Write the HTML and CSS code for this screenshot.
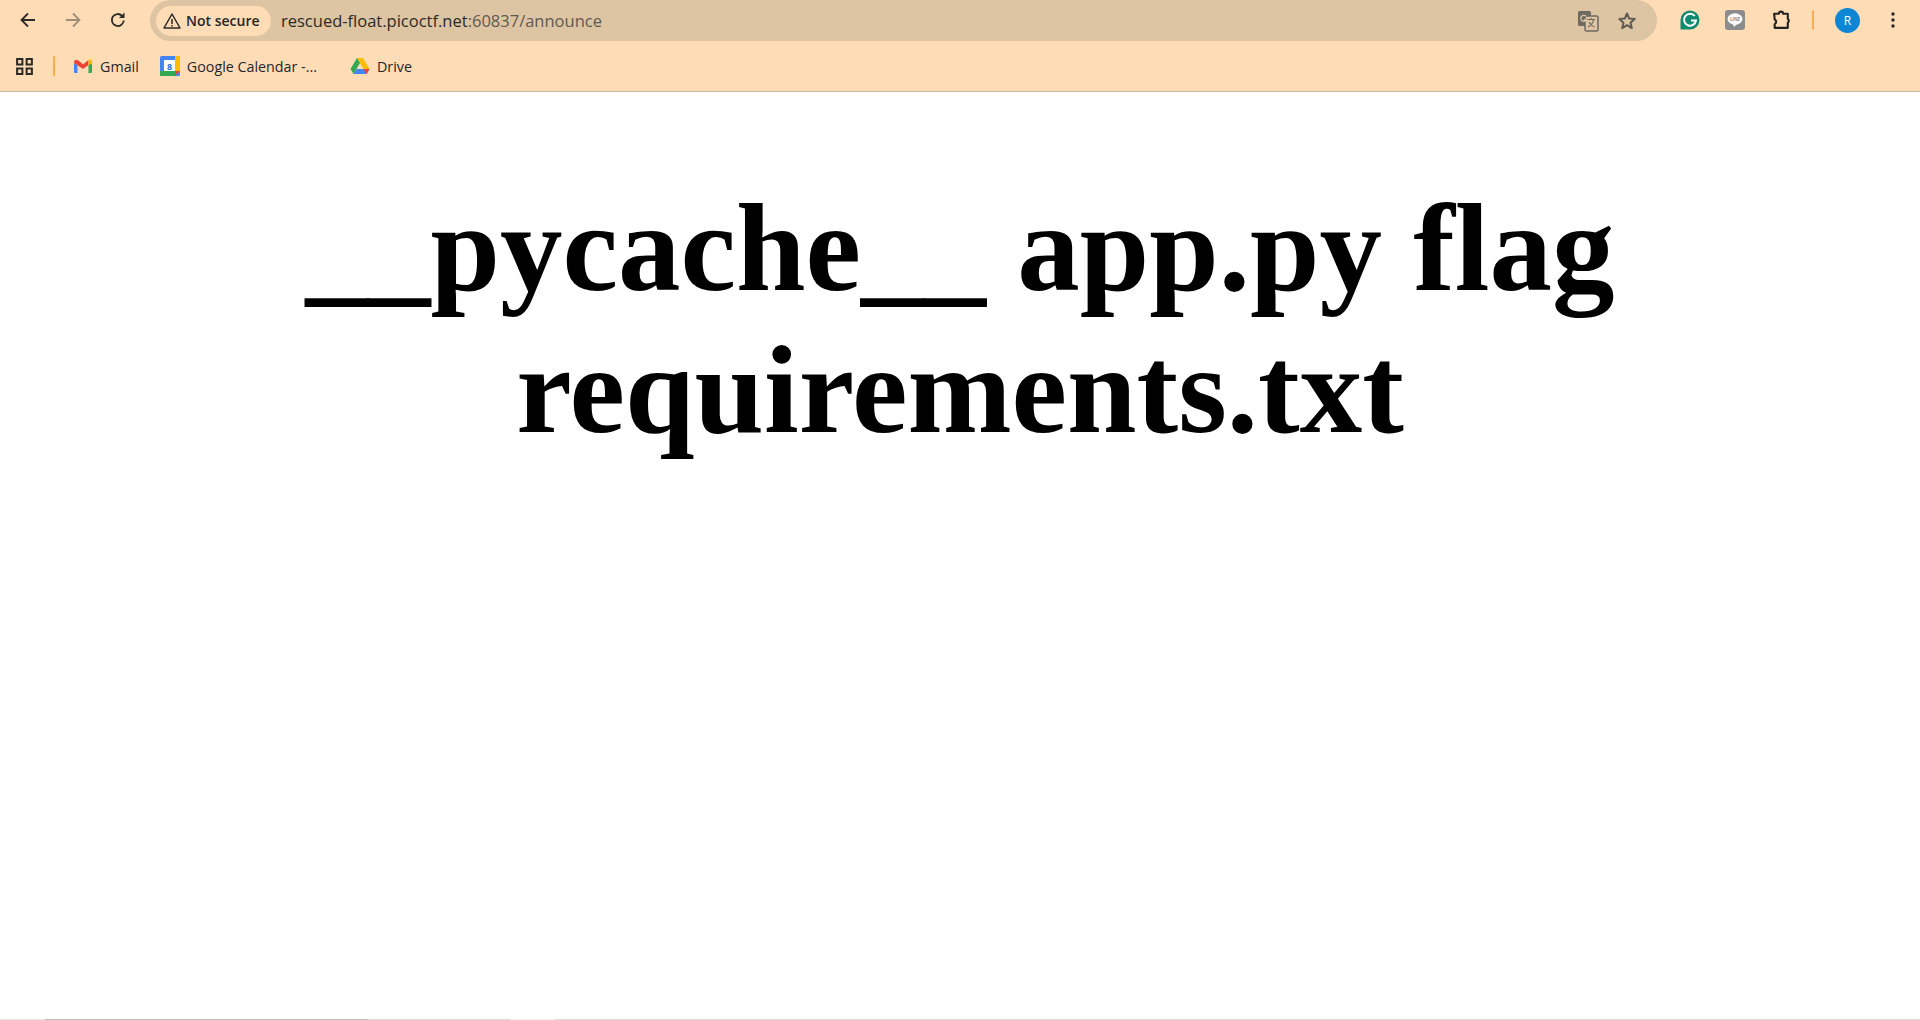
FILE: index.html
```html
<!DOCTYPE html>
<html>
<head>
    <title>Announce</title>
    <link rel="stylesheet" href="styles.css">
</head>
<body>
    <header class="chrome">
        <div class="toolbar">
            <div class="nav-buttons">
                <svg class="nav-icon" viewBox="0 0 20 20"><path d="M17 10H4M10 3.5 3.5 10l6.500 6.500" fill="none" stroke="#2b2a26" stroke-width="1.800"/></svg>
                <svg class="nav-icon" viewBox="0 0 20 20"><path d="M3 10h13M10 3.500l6.500 6.500-6.500 6.500" fill="none" stroke="#a08f78" stroke-width="1.800"/></svg>
                <svg class="nav-icon" viewBox="0 0 20 20"><path d="M15.800 10.500a6 6 0 1 1-1.700-4.700" fill="none" stroke="#2b2a26" stroke-width="1.800"/><path d="M16.500 2.500v5.500H11z" fill="#2b2a26"/></svg>
            </div>
            <div class="omnibox">
                <div class="security-chip">
                    <svg class="warn-icon" viewBox="0 0 20 20"><path d="M10 3 2 17h16z" fill="none" stroke="#2b2a26" stroke-width="1.500" stroke-linejoin="round"/><path d="M10 8v5M10 14v1.500" stroke="#2b2a26" stroke-width="1.500"/></svg>
                    <span>Not secure</span>
                </div>
                <div class="url">rescued-float.picoctf.net<span class="url-dim">:60837/announce</span></div>
                <svg class="translate-icon" viewBox="0 0 22 22">
                    <rect x="1" y="1" width="13" height="15" rx="1.500" fill="#6f6a62"/>
                    <rect x="8" y="6" width="13" height="15" rx="1.500" fill="#ddc4a2" stroke="#6f6a62" stroke-width="1.500"/>
                    <path d="M10 9.500h8M14 8v1.500M11 17c3-1.500 5-4 5.500-7.500M12 12c1 2 3 4 5.500 5" fill="none" stroke="#6f6a62" stroke-width="1.200"/>
                    <path d="M9 6.200A3 3 0 1 0 9.300 10H6.800" fill="none" stroke="#ddc4a2" stroke-width="1.300"/>
                </svg>
                <svg class="star-icon" viewBox="0 0 20 20"><path d="m10 2.500 2.200 5.100 5.500.5-4.200 3.600 1.300 5.400L10 14.200l-4.800 2.900 1.300-5.400L2.300 8.100l5.500-.5z" fill="none" stroke="#5f5b54" stroke-width="2" stroke-linejoin="round"/></svg>
            </div>
            <div class="extensions">
                <svg class="ext-grammarly" viewBox="0 0 20 20">
                    <path d="M10 .5a9.500 9.500 0 0 1 0 19H.5V10A9.500 9.500 0 0 1 10 .5z" fill="#0e8a6e"/>
                    <path d="M14.800 6a6 6 0 1 0 1.200 4.500h-5" fill="none" stroke="#ffffff" stroke-width="2"/>
                </svg>
                <svg class="ext-line" viewBox="0 0 20 20">
                    <rect width="20" height="20" rx="3" fill="#8c8c8c"/>
                    <ellipse cx="10" cy="9" rx="7.500" ry="5.800" fill="#ffffff"/>
                    <path d="M8 14h4l-3 3z" fill="#ffffff"/>
                    <text x="10" y="10.500" class="line-label">LINE</text>
                </svg>
                <svg class="ext-puzzle" viewBox="0 0 20 20"><path d="M3 3.500h4.500a2 2 0 0 1 4 0H16v5a2 2 0 0 1 0 3.500v5H3.500v-3.500a2.500 2.500 0 0 0 0-4.500z" fill="none" stroke="#22221f" stroke-width="2" stroke-linejoin="round"/></svg>
                <div class="orange-sep"></div>
                <div class="avatar">R</div>
                <svg class="menu-icon" viewBox="0 0 4 18"><circle cx="2" cy="3" r="1.700"/><circle cx="2" cy="9" r="1.700"/><circle cx="2" cy="15" r="1.700"/></svg>
            </div>
        </div>
        <div class="bookmarks">
            <svg class="apps-icon" viewBox="0 0 18 18"><path d="M2 2h5v5H2zM11 2h5v5h-5zM2 11h5v5H2zM11 11h5v5h-5z" fill="none" stroke="#2b2a26" stroke-width="1.900"/></svg>
            <div class="orange-sep bookmark-sep"></div>
            <a class="bookmark bookmark-gmail">
                <svg class="bookmark-icon" viewBox="0 0 20 16">
                    <path d="M1 5v9a1 1 0 0 0 1 1h2.500V7z" fill="#4285f4"/>
                    <path d="M19 5v9a1 1 0 0 1-1 1h-2.500V7z" fill="#34a853"/>
                    <path d="M1 5c0-3 2-4 4-2.500L10 6.500l-2 3-3.500-2.500L1 5z" fill="#ea4335"/>
                    <path d="M4.500 7V2L10 6.500 15.500 2v5L10 11z" fill="#ea4335"/>
                    <path d="M15.500 2c2-1.500 3.500-.5 3.500 3l-3.500 2.500z" fill="#fbbc04"/>
                </svg>
                <span>Gmail</span>
            </a>
            <a class="bookmark bookmark-calendar">
                <svg class="bookmark-icon" viewBox="0 0 20 20">
                    <rect width="20" height="20" rx="1.500" fill="#4285f4"/>
                    <rect x="15" width="5" height="15" fill="#fbbc04"/>
                    <rect y="15" width="15" height="5" fill="#34a853"/>
                    <path d="M15 15h5l-5 5z" fill="#ea4335"/>
                    <rect x="4" y="4" width="11" height="11" fill="#fff"/>
                    <text x="9.500" y="13.500" class="calendar-day">8</text>
                </svg>
                <span>Google Calendar -...</span>
            </a>
            <a class="bookmark">
                <svg class="bookmark-icon" viewBox="0 0 20 18">
                    <path d="M7 1h6l6.500 11h-6z" fill="#fbbc04"/>
                    <path d="M7 1 .5 12l3 5 6.500-11z" fill="#34a853"/>
                    <path d="M3.500 17h13l3-5H6.500z" fill="#4285f4"/>
                    <path d="M13.500 12h6l-3 5z" fill="#ea4335"/>
                </svg>
                <span>Drive</span>
            </a>
        </div>
    </header>

    <main class="content">
        <h1 class="listing">__pycache__ app.py flag requirements.txt</h1>
    </main>

    <div class="taskbar-edge">
        <span class="edge-a"></span>
        <span class="edge-b"></span>
        <span class="edge-c"></span>
        <span class="edge-d"></span>
        <span class="edge-e"></span>
    </div>
</body>
</html>
```

FILE: styles.css
```css
html, body {
    height: 100%;
}

body {
    margin: 0;
    padding: 0;
    display: flex;
    flex-direction: column;
    background-color: #ffffff;
    overflow: hidden;
}

.chrome {
    height: 91px;
    flex-shrink: 0;
    display: flex;
    flex-direction: column;
    background-color: #fedcb6;
    border-bottom: 1px solid #cdb9a0;
    font-family: "Open Sans", "Noto Sans", Arial, sans-serif;
    color: #26262a;
}

.toolbar {
    height: 41px;
    display: flex;
    align-items: flex-start;
}

.nav-buttons {
    width: 150px;
    height: 40px;
    flex-shrink: 0;
    display: flex;
    align-items: center;
    padding-left: 18px;
    gap: 25px;
    box-sizing: border-box;
}

.nav-icon {
    width: 20px;
    height: 20px;
}

.omnibox {
    width: 1507px;
    height: 41px;
    flex-shrink: 0;
    display: flex;
    align-items: center;
    box-sizing: border-box;
    padding-left: 6px;
    background-color: #ddc4a2;
    border-radius: 21px;
}

.security-chip {
    width: 115px;
    height: 30px;
    flex-shrink: 0;
    display: flex;
    align-items: center;
    box-sizing: border-box;
    padding-left: 6px;
    gap: 4px;
    background-color: #fedcb6;
    border-radius: 15px;
    font-size: 14px;
    font-weight: 600;
    white-space: nowrap;
}

.warn-icon {
    width: 20px;
    height: 20px;
}

.url {
    margin-left: 10px;
    font-size: 16.500px;
    color: #2c2a26;
    white-space: nowrap;
    flex: 1;
}

.url-dim {
    color: #5f5a52;
}

.translate-icon {
    width: 22px;
    height: 22px;
    margin-right: 18px;
}

.star-icon {
    width: 20px;
    height: 20px;
    margin-right: 20px;
}

.extensions {
    flex: 1;
    height: 40px;
    display: flex;
    align-items: center;
    padding-left: 23px;
}

.ext-grammarly {
    width: 20px;
    height: 20px;
    margin-right: 25px;
}

.ext-line {
    width: 20px;
    height: 20px;
    margin-right: 26px;
}

.line-label {
    font-family: "Open Sans", Arial, sans-serif;
    font-size: 4.500px;
    font-weight: 700;
    fill: #8c8c8c;
    text-anchor: middle;
}

.ext-puzzle {
    width: 21px;
    height: 21px;
}

.orange-sep {
    width: 2px;
    height: 20px;
    margin: 0 21px 0 20px;
    background-color: #f9ae4d;
    border-radius: 1px;
}

.avatar {
    width: 25px;
    height: 25px;
    flex-shrink: 0;
    background-color: #0d86d6;
    border-radius: 50%;
    color: #ffffff;
    font-size: 12px;
    line-height: 25px;
    text-align: center;
}

.menu-icon {
    width: 4px;
    height: 18px;
    margin-left: 31px;
    fill: #26262a;
}

.bookmarks {
    flex: 1;
    display: flex;
    align-items: center;
    padding-left: 15px;
    font-size: 14.300px;
}

.apps-icon {
    width: 19px;
    height: 19px;
}

.bookmark-sep {
    margin: 0 18px 0 19px;
}

.bookmark {
    display: flex;
    align-items: center;
    gap: 7px;
    white-space: nowrap;
}

.bookmark-gmail {
    margin-right: 21px;
}

.bookmark-calendar {
    margin-right: 33px;
}

.bookmark-icon {
    width: 20px;
    height: 20px;
}

.calendar-day {
    font-family: "Open Sans", Arial, sans-serif;
    font-size: 9px;
    font-weight: 700;
    fill: #1a73e8;
    text-anchor: middle;
}

.content {
    flex: 1;
}

.listing {
    margin: 85px 8px 0;
    font-family: "Liberation Serif", "Times New Roman", serif;
    font-size: 125px;
    font-weight: bold;
    line-height: 142px;
    text-align: center;
    color: #000000;
}

.taskbar-edge {
    height: 1px;
    flex-shrink: 0;
    display: flex;
}

.edge-a {
    width: 45px;
    background-color: #e8e8e8;
}

.edge-b {
    width: 323px;
    background-color: #bcbcbc;
}

.edge-c {
    width: 142px;
    background-color: #dcdcdc;
}

.edge-d {
    width: 45px;
    background-color: #f4f4f4;
}

.edge-e {
    flex: 1;
    background-color: #dcdcdc;
}
```
